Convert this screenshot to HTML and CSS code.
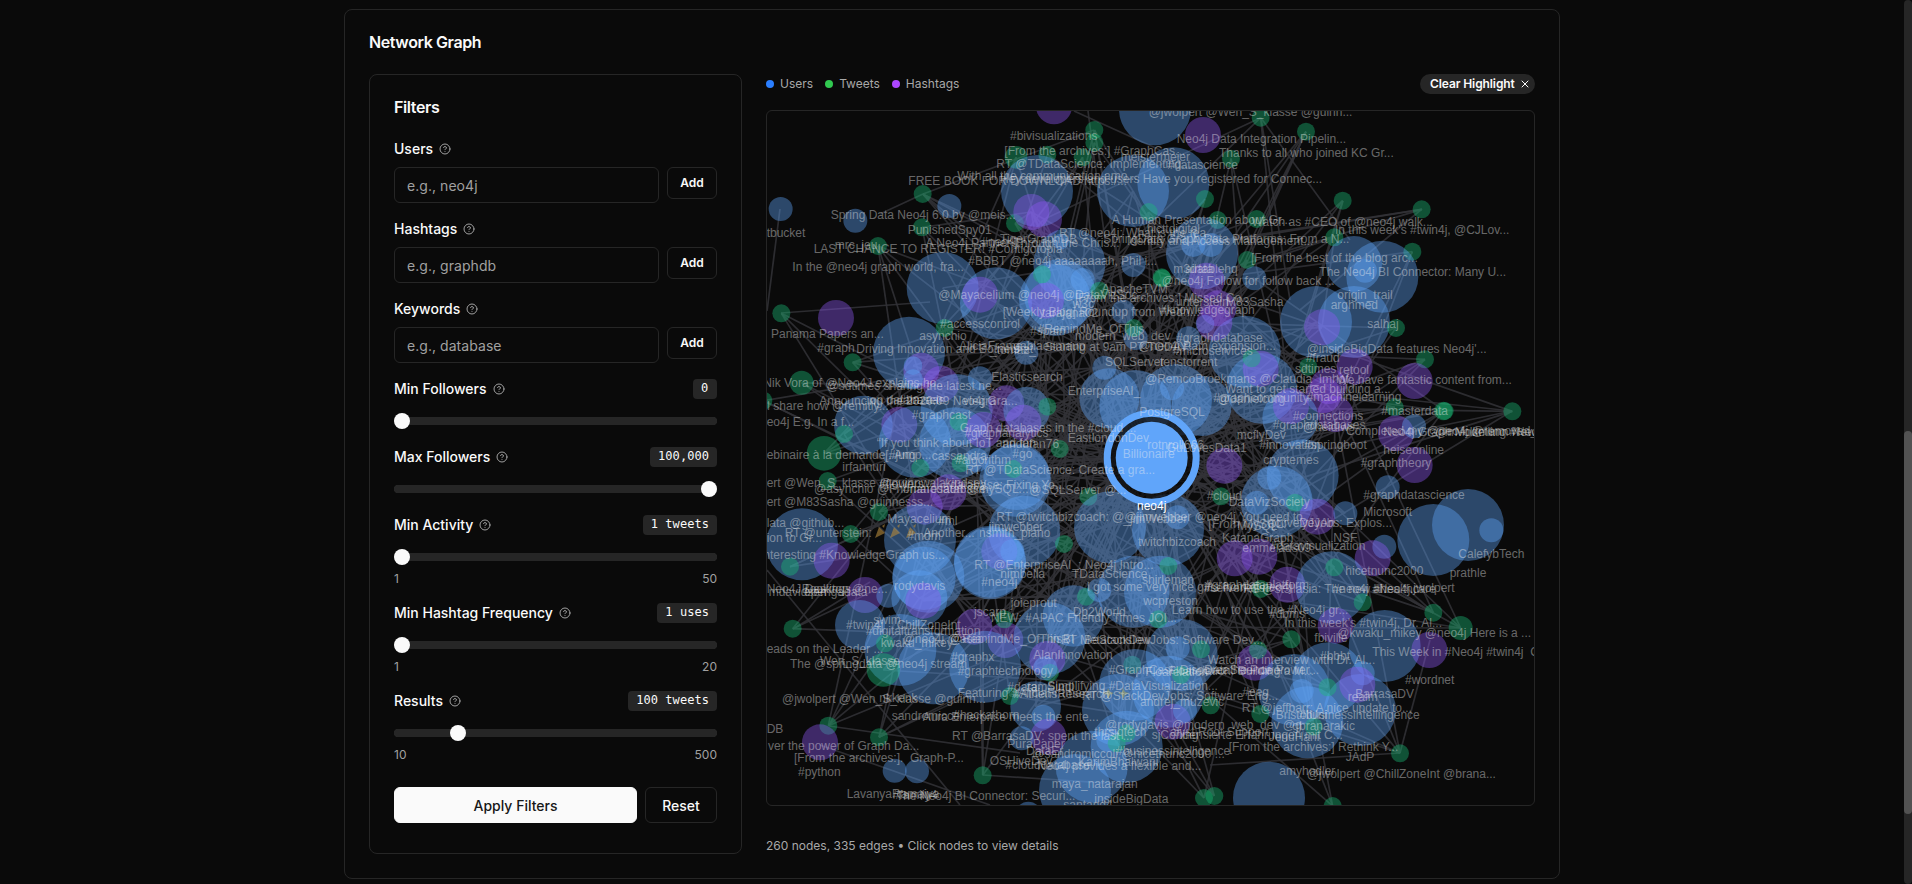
FILE: index.html
```html
<!DOCTYPE html>
<html lang="en">
<head>
<meta charset="utf-8">
<title>Network Graph</title>
<link rel="stylesheet" href="styles.css">
</head>
<body>
<svg class="defs" aria-hidden="true"><symbol id="help" viewBox="0 0 24 24"><circle cx="12" cy="12" r="10"/><path d="M9.09 9a3 3 0 0 1 5.83 1c0 2-3 3-3 3M12 17h.01"/></symbol></svg>
<main class="card">
  <h1 class="title">Network Graph</h1>
  <div class="columns">
    <section class="filters">
      <h2 class="title">Filters</h2>
      <div class="field">
        <div class="label">Users <svg class="help"><use href="#help"/></svg></div>
        <div class="entry"><input class="input" placeholder="e.g., neo4j"><button class="btn add">Add</button></div>
      </div>
      <div class="field">
        <div class="label">Hashtags <svg class="help"><use href="#help"/></svg></div>
        <div class="entry"><input class="input" placeholder="e.g., graphdb"><button class="btn add">Add</button></div>
      </div>
      <div class="field">
        <div class="label">Keywords <svg class="help"><use href="#help"/></svg></div>
        <div class="entry"><input class="input" placeholder="e.g., database"><button class="btn add">Add</button></div>
      </div>
      <div class="field">
        <div class="label">Min Followers <svg class="help"><use href="#help"/></svg><span class="value">0</span></div>
        <div class="slider"><i class="thumb"></i></div>
      </div>
      <div class="field">
        <div class="label">Max Followers <svg class="help"><use href="#help"/></svg><span class="value">100,000</span></div>
        <div class="slider"><i class="thumb" style="margin-left:307px"></i></div>
      </div>
      <div class="field">
        <div class="label">Min Activity <svg class="help"><use href="#help"/></svg><span class="value">1 tweets</span></div>
        <div class="slider"><i class="thumb"></i></div>
        <div class="limits"><span>1</span><span>50</span></div>
      </div>
      <div class="field">
        <div class="label">Min Hashtag Frequency <svg class="help"><use href="#help"/></svg><span class="value">1 uses</span></div>
        <div class="slider"><i class="thumb"></i></div>
        <div class="limits"><span>1</span><span>20</span></div>
      </div>
      <div class="field">
        <div class="label">Results <svg class="help"><use href="#help"/></svg><span class="value">100 tweets</span></div>
        <div class="slider"><i class="thumb" style="margin-left:56px"></i></div>
        <div class="limits"><span>10</span><span>500</span></div>
      </div>
      <div class="actions"><button class="btn apply">Apply Filters</button><button class="btn reset">Reset</button></div>
    </section>
    <section class="graph">
      <div class="toolbar">
        <span class="key"><i class="dot users"></i><span>Users</span></span>
        <span class="key"><i class="dot tweets"></i><span>Tweets</span></span>
        <span class="key"><i class="dot hashtags"></i><span>Hashtags</span></span>
        <button class="clear"><span>Clear Highlight</span> <svg class="close" viewBox="0 0 24 24"><path d="M18 6 6 18M6 6l12 12"/></svg></button>
      </div>
      <svg class="canvas" id="canvas" viewBox="767 111 767 694"></svg>
      <p class="summary">260 nodes, 335 edges • Click nodes to view details</p>
    </section>
  </div>
</main>
<div class="scrollbar"><i class="grip"></i></div>
<script src="graph.js"></script>
</body>
</html>
```
FILE: styles.css
```css
* { box-sizing: border-box; }
html, body { margin: 0; height: 100%; overflow: hidden; background: #0a0a0a; }
body { color: #fafafa; font-family: Inter, "Liberation Sans", sans-serif; font-size: 14px; padding: 9px 8px 0 0; }
.defs { position: absolute; width: 0; height: 0; }
.card { width: 1216px; height: 870px; margin-left: 344px; padding: 24px; border: 1px solid #262626; border-radius: 8px; }
.title { margin: 0 0 24px; font-size: 16px; line-height: 16px; font-weight: 600; letter-spacing: -0.4px; }
.columns { display: grid; grid-template-columns: 373px 769px; gap: 24px; }
.filters { height: 780px; padding: 24px; border: 1px solid #262626; border-radius: 8px; }
.field { display: flow-root; margin-bottom: 16px; }
.label { display: flex; align-items: center; height: 20px; line-height: 20px; font-weight: 500; }
.help { width: 12px; height: 12px; margin-left: 6px; fill: none; stroke: #a1a1a1; stroke-width: 2; stroke-linecap: round; stroke-linejoin: round; }
.value { margin-left: auto; padding: 0 8px; height: 20px; border-radius: 4px; background: #262626; font: 12px/19px "DejaVu Sans Mono", monospace; letter-spacing: 0.05px; min-width: 24px; }
.entry { display: flex; align-items: flex-start; gap: 8px; margin-top: 8px; }
.input { flex: 1; min-width: 0; height: 36px; padding: 2px 12px; background: transparent; border: 1px solid #262626; border-radius: 6px; color: #fafafa; font: 14px Inter, sans-serif; letter-spacing: 0.05px; }
.input::placeholder { color: #a1a1a1; opacity: 1; }
.btn { padding: 0; border: 1px solid #262626; border-radius: 6px; background: transparent; color: #fafafa; font: 500 14px Inter, sans-serif; }
.add { width: 50px; height: 32px; padding-bottom: 1px; font-size: 12px; font-weight: 600; }
.slider { height: 16px; margin: 14px 0 2px; padding: 0; background: linear-gradient(#262626, #262626) center / calc(100% - 8px) 8px no-repeat, radial-gradient(circle at 4px 8px, #262626 4px, transparent 4.5px), radial-gradient(circle at calc(100% - 4px) 8px, #262626 4px, transparent 4.5px); }
.thumb { display: block; width: 16px; height: 16px; border-radius: 50%; background: #fafafa; }
.limits { display: flex; justify-content: space-between; padding-top: 4px; font-size: 12px; line-height: 16px; color: #a1a1a1; }
.actions { display: flex; gap: 8px; margin-top: 24px; }
.apply { flex: 1; height: 36px; background: #fafafa; color: #171717; border-color: #fafafa; }
.reset { width: 72px; height: 36px; }
.toolbar { display: flex; align-items: center; gap: 12px; height: 20px; margin-bottom: 16px; font-size: 12px; color: #a8a8a8; }
.key { display: flex; align-items: center; gap: 6px; }
.key span, .clear span { margin-top: -1px; }
.dot { width: 8px; height: 8px; border-radius: 50%; }
.users { background: #2b7fff; }
.tweets { background: #31c950; }
.hashtags { background: #ad46ff; }
.clear { display: flex; align-items: center; gap: 4px; margin-left: auto; width: 115px; height: 20px; padding: 0 0 0 10px; border: 0; border-radius: 10px; background: #262626; color: #fafafa; font: 600 12px Inter, sans-serif; letter-spacing: -0.1px; white-space: nowrap; }
.close { flex: none; width: 12px; height: 12px; fill: none; stroke: #fafafa; stroke-width: 2; stroke-linecap: round; }
.canvas { display: block; width: 769px; height: 696px; border: 1px solid #262626; border-radius: 6px; overflow: hidden; }
.canvas text { font: 12px "Liberation Sans", Arial, sans-serif; fill: #f0f0f0; fill-opacity: .42; white-space: pre; }
.canvas .selected { fill: #fff; fill-opacity: 1; }
.edge { stroke: #323237; stroke-opacity: .85; stroke-width: 1.7; }
.node { fill-opacity: .4; }
.b, .B { fill: #60a5fa; }
.g { fill: #18bd78; }
.p { fill: #8f58f6; }
.halo { fill: none; stroke: #60a5fa; stroke-width: 7; }
.gap { fill: none; stroke: #0a0a0a; stroke-width: 6; stroke-opacity: .7; }
.core { fill: #60a5fa; }
.popper { fill: #b58a3c; fill-opacity: .6; }
.spark { fill: #facc15; fill-opacity: .3; }
.summary { margin: 32px 0 0; font-size: 12px; line-height: 16px; color: #a8a8a8; }
.scrollbar { position: absolute; right: 0; top: 0; width: 8px; height: 884px; border-radius: 4px; background: #262626; }
.grip { display: block; margin-top: 431px; height: 383px; border-radius: 4px; background: #525252; }
```
FILE: graph.js
```js
// Each cluster has an origin; node and label positions are in thirds of a pixel.
// Node kinds: B large user, b small user, g tweet, p hashtag.
const clusters = [
{ x: 760, y: 60,
nodes: "B 1185 148,p 882 139,g 1003 210,g 1003 248,g 968 292,g 862 284,g 768 292 34,B 831 393,B 1119 393,B 1240 370,g 488 402,b 568 438,b 62 447,b 286 482,g 486 502,g 765 490,p 814 456,p 852 478,g 354 558,b 1120 615,g 1166 456,B 928 612,B 548 684,B 708 730,B 885 720,B 900 705,p 660 704,p 858 722,b 968 660,g 846 643,g 1018 692,g 1205 652,g 64 760,p 228 774,b 902 545 24,b 1090 755",
labels: [[1166,155,"@jwolpert @Wen_S_klasse @guinn..."],[750,228,"#bivisualizations"],[733,273,"[From the archives:] #GraphCas..."],[1082,291,"meistermeier"],[709,312,"RT @TDataScience: Implementing..."],[592,347,"With all the communication amo..."],[720,356,"Hey developers and users Have you registered for Connec..."],[445,362,"FREE BOOK FOR DOWNLOAD https:/..."],[212,465,"Spring Data Neo4j 6.0 by @meis..."],[443,510,"PunishedSpy01"],[224,555,"mrc_jeu"],[161,567,"LAST CHANCE TO REGISTER! #Contigotopia"],[497,548,"A Neo4j Partner Through the Chris..."],[664,545,"#neo4j"],[720,537,"TigerGraphDB"],[625,602,"#BBBT @neo4j aaaaaaaah, Phil i..."],[897,518,"RT @neo4j: What is the fea..."],[97,620,"In the @neo4j graph world, fra..."],[20,518,"tbucket"],[535,704,"@Mayacelium @neo4j @DataVizSoc..."],[1025,686,"ApacheTVM"],[945,715,"[From the archives:] Missed Co..."],[938,732,"w3c"],[728,756,"[Weekly Blog] Roundup from Wedn..."],[845,758,"tarajana02"],[1055,480,"A Human Presentation about Gr..."],[1160,508,"hicttdigital"],[1030,538,"SpringData Graph Data Platforms: From a N..."],[1100,543,"Identity and Access Management..."]] },
{ x: 1150, y: 60,
nodes: "p 159 225,g 332 173,g 468 215,g 243 296,g 165 417,g 578 422,g 815 448,g 203 480,g 320 477,g 553 532,g 787 575,g 292 600,B 156 580,b 130 555,b 183 555,b 313 655,p 170 662,p 205 745,g 37 655,B 612 612 84,B 697 650,b 645 632,B 498 786,B 612 786",
labels: [[80,237,"Neo4j Data Integration Pipelin..."],[207,279,"Thanks to all who joined KC Gr..."],[52,315,"#datascience"],[305,486,"Watch as #CEO of @neo4j walk..."],[555,510,"In this week's #twin4j, @CJLov..."],[303,594,"[From the best of the blog arc..."],[508,636,"The Neo4j BI Connector: Many U..."],[70,627,"m3data"],[105,628,"airtablehq"],[35,663,"@neo4j Follow for follow back ..."],[562,705,"origin_trail"],[542,736,"arghmed"],[78,725,"unterstein"],[228,726,"M83Sasha"],[30,750,"#knowledgegraph"]] },
{ x: 760, y: 310,
nodes: "B 447 128,g 554 54,p 484 182,b 459 167 28,b 459 208 30,p 543 222,B 590 300,b 660 205,g 278 157,g 125 218 36,g 10 272,B 310 345 88,p 418 344,B 465 395,g 252 372,B 585 400,p 739 280,B 800 300 70,g 862 290,p 790 338,p 670 360,g 596 335,g 192 430 52,g 203 513,g 481 474,g 602 460,g 899 417,B 766 512,B 770 500 100,g 760 477,p 565 547,p 494 590,g 985 560,g 357 606,B 480 690,B 126 703,p 215 752,g 272 672,g 90 770,B 793 665,B 690 755,p 718 724,b 757 724,g 912 702,B 492 805 95,B 1050 652,B 1224 660,B 1048 265 90,B 1126 288,b 1033 173,b 1127 84,g 1121 54,b 799 128,b 650 450",
labels: [[33,72,"Panama Papers an..."],[540,42,"#accesscontrol"],[478,77,"asynchio"],[172,113,"#graph"],[289,116,"Driving Innovation and Botnets at"],[597,107,"AliciaFrame"],[760,108,"gablaesmaup"],[690,121,"_tomaz_"],[854,111,"Starting at 9am PT TODAY!"],[810,62,"#spain"],[833,57,"#RemindMe_OfThis"],[945,78,"modern_web_dev"],[1135,108,"@neo4j Path expansion..."],[1035,156,"SQLServer"],[694,200,"Elasticsearch"],[923,242,"EnterpriseAI_"],[1155,207,"@RemcoBroekmans @Claudia_Imhof..."],[10,219,"Nik Vora of @Neo4J explains ho..."],[200,227,"@sdtimes sharing the latest ne..."],[178,272,"Announcing the 2020.09 Neo4j Gra..."],[330,271,"on databasels"],[418,271,"#bazaar"],[610,273,"vlegra"],[20,288,"I share how @remitly..."],[20,336,"eo4j E.g. In a f..."],[455,315,"#graphcast"],[599,353,"Graph databases in the #cloud ..."],[613,370,"#graphanalytics"],[350,400,"“If you think about IoT and fan"],[727,401,"andufan76"],[923,384,"EastlondonDev"],[20,435,"ebinaire à la demande #jump..."],[375,435,"[. Ang"],[515,438,"cassandra"],[585,450,"#algorithm"],[757,431,"#go"],[247,471,"irfannuri"],[616,480,"RT @TDataScience: Create a gra..."],[20,519,"ert @Wen_S_klasse @guinnwalakindsey"],[357,523,"#flowers"],[550,525,"#database: Fixing Yo..."],[162,537,"@asynchio @Fhomaresaon @mySQL..."],[429,537,"#nanodatabase"],[808,540,"@SQLServer @..."],[20,576,"ert @M83Sasha @guinnesss..."],[382,626,"Mayacelium"],[534,634,"#ml"],[20,640,"lata @github..."],[74,669,"RT @unterstein:"],[490,669,"Another..."],[442,679,"#mdm"],[20,684,"ion to Gr..."],[657,668,"nsmith_piano"],[686,650,"jimwebber"],[709,620,"RT @twitchbizcoach: @@jimwebber @neo4j You need to..."],[1090,626,"_jimWebber"],[10,736,"nteresting #KnowledgeGraph us..."],[643,765,"RT @EnterpriseAI_: Neo4j Intro..."],[1134,695,"twitchbizcoach"],[1138,305,"PostgreSQL"],[1162,404,"rotnroll666"],[1088,432,"Billionaire"]] },
{ x: 1150, y: 310,
nodes: "B 284 125,B 335 235 106,p 332 176,g 305 145,b 165 42 28,b 115 85,p 193 38,p 516 52,g 738 54,g 825 148,p 794 213,p 614 170,g 475 170,p 535 228,p 520 255,p 556 312,g 734 292,g 880 303 28,g 884 303,g 1087 304,p 738 370,b 792 349,p 794 465,B 421 325 84,p 423 288,B 458 496,B 380 575,b 358 503,b 320 578,g 435 578,p 223 467,g 213 559,B 78 270,b 66 234,B 155 288 90,p 502 620,b 586 610,b 713 532,B 850 690,B 954 645,b 1024 661,b 703 710,p 668 745,p 328 740,p 254 745,b 82 622",
labels: [[652,42,"salhaj"],[78,84,"#graphdatabase"],[68,123,"#microservices"],[30,156,"tenstorrent"],[470,117,"@insideBigData features Neo4j'..."],[467,145,"#fraud"],[435,178,"sdtimes"],[567,180,"retool"],[560,210,"We have fantastic content from..."],[225,236,"Want to get started building a..."],[190,265,"#graphcommunity"],[203,267,"@danielcorg"],[470,261,"#machinelearning"],[694,303,"#masterdata"],[428,317,"#connections"],[368,345,"#graphdatabases"],[458,352,"@heidiws"],[588,362,"Completed my @neo4j @removed_ @_en..."],[700,366,"Neo4j Graph Modelling #Neo4j"],[855,367,"@mvolkmann Newy4jatabase"],[260,375,"mcflyDev"],[328,405,"#innovation"],[462,405,"#springboot"],[700,419,"heiseonline"],[632,460,"#graphtheory"],[340,450,"cryptemes"],[50,413,"GuLovesData1"],[170,557,"#cloud"],[236,577,"DataVizSociety"],[640,555,"#graphdatascience"],[640,606,"Microsoft"],[175,641,"[From MySQL:"],[262,647,"MySQL"],[354,640,"activeDJJobs: Explos..."],[455,640,"yeyAn"],[216,684,"KatanaGraph"],[550,684,"NSF"],[277,713,"emmelads09"],[360,708,"#datavisualization"],[925,731,"CalefybTech"],[899,789,"prathle"],[586,782,"hicetnunc2000"]] },
{ x: 760, y: 560,
nodes: "p 315 105,b 385 107,B 300 195 75,g 98 206,B 421 270,B 520 325,B 505 50,B 478 115 84,p 490 122,B 690 10,g 375 250,g 370 330 50,p 643 200,p 736 240,g 733 178,B 675 320,B 868 235,B 940 168 92,p 862 297,g 870 338,b 856 325,g 978 110,b 1018 90,B 1200 95,B 1120 95,g 205 497,p 180 547,g 357 532,g 668 646,b 404 632,b 471 634,B 827 440 76,g 750 408,b 850 470,p 865 530,b 785 535,g 1117 314,B 1125 375,B 1074 450,B 1100 560,B 995 620,B 945 690,b 1045 540,g 1100 520,g 1070 550,b 805 765 40,B 1225 395",
labels: [[20,87,"Neo4J Desktop @ne..."],[125,87,"Bookings"],[26,97,"mdavidsen"],[132,95,"opengadata"],[402,78,"rodydavis"],[664,66,"#neo4j"],[721,42,"nimbella"],[936,42,"TDataScience"],[980,80,"I got some very nice gifts from @neo4j"],[1146,61,"shirleman"],[1150,123,"wcpreston"],[752,129,"joieprout"],[642,157,"jscarp"],[692,174,"NEW: #APAC Friendly Times JOI..."],[938,157,"Db2World"],[340,179,"swim"],[258,195,"#twin4j"],[410,195,"ChillZoneInt"],[317,212,"#digitaltransformation"],[362,249,"kwaku_mikey"],[428,238,"@neo4j @asia"],[570,238,"@RemindMe_OfThis"],[870,238,"in BI"],[903,239,"RT MetaconsIew"],[972,240,"BeStackDevJobs: Software Dev..."],[20,267,"eads on the Leader ..."],[180,302,"Wen_S_klasse"],[90,312,"The @springdata @neo4j stream"],[573,291,"#graphx"],[820,285,"AlanInnovation"],[593,332,"#graphtechnology"],[742,380,"#data"],[800,380,"ramSindl"],[862,378,"Simplifying #DataVisualization..."],[593,398,"Featuring #AliciaFrame"],[760,403,"#AthensResearch"],[66,416,"@jwolpert @Wen_S_klasse @guinn..."],[358,414,"nkkenk"],[395,467,"sandromicco"],[488,471,"Aura Enterprise meets the ente..."],[580,464,"#hackathorn"],[20,507,"DB"],[24,557,"ver the power of Graph Da..."],[102,594,"[From the archives:].  Graph-P..."],[114,636,"#python"],[576,527,"RT @BarrasaDV: spent the last ..."],[742,553,"PuraPaper"],[798,572,"DataEr"],[817,581,"@sandromiccoli @nicetnunc2000 ..."],[689,602,"OSHiveDev"],[736,614,"#clouddatabase"],[832,617,"Neo4j provides a flexible and..."],[955,605,"KarimBhalwani"],[1068,574,"#businessintelligence"],[875,671,"maya_natarajan"],[260,702,"LavanyaRamaiya"],[398,704,"#family4"],[408,709,"The Neo4j BI Connector: Securi..."],[1003,717,"insideBigData"],[910,736,"santand4"],[1046,329,"#GraphCast: Discover the Power"],[1156,335,"Floarelation"],[965,408,"RT @StackDevJobs: Software Eng..."],[1140,427,"andrej_muzevic"],[1035,496,"@rodydavis @modern_web_dev @g"],[1003,516,"thrsjqtech"]] },
{ x: 1150, y: 560,
nodes: "p 412 74,B 545 82,g 553 22,g 332 87,g 638 127,p 557 197,g 850 158,g 932 204 36,g 424 238,B 704 258,p 838 270,B 95 285,g 153 268,b 83 265,p 315 308,g 324 270,B 432 390,B 535 355,B 630 450,B 472 487,b 455 393,b 638 340,p 622 374,g 533 382,g 491 500,g 182 436,g 331 462,p 68 485,b 105 452,g 750 580,B 357 713,g 162 714,g 193 708,g 548 738,g 25 178,g 93 345,g 55 18",
labels: [[790,84,"jwolpert"],[165,76,"#graphdataplatform"],[161,83,"#serverless"],[280,86,"RT @st3llasia: The new ai.."],[548,86,"#neo4j #Neo4j..."],[670,86,"#healthcare"],[65,150,"Learn how to use the #Neo4j gr..."],[357,161,"#dbms"],[403,188,"In this week's #twin4j, Dr. Al..."],[562,219,"@kwaku_mikey @neo4j Here is a ..."],[493,234,"fbiville"],[667,276,"This Week in #Neo4j #twin4j  Grap"],[510,289,"#bbbt"],[173,300,"Watch an interview with Dr. Al..."],[765,360,"#wordnet"],[55,333,"Floarelation: Building a M..."],[163,331,"DataScience Power..."],[277,396,"#eeg"],[616,401,"BarrasaDV"],[593,411,"realm"],[275,443,"RT @jeffbarr: A nice update to..."],[377,465,"BristolUni"],[447,466,"#businessintellingence"],[427,499,"gbranarakic"],[60,517,"alyst Root Support"],[5,526,"sjConing"],[98,526,"densierte Erfahrungen mit C..."],[356,531,"JenuHani"],[236,561,"[From the archives:] Rethink Y..."],[587,590,"JAdP"],[388,632,"amyhodler"],[470,642,"@jwolpert @ChillZoneInt @brana..."]] }
];

const NS = "http://www.w3.org/2000/svg";
const canvas = document.getElementById("canvas");
const radius = { B: 108, b: 36, g: 27, p: 54 };
const add = (tag, attrs, text) => {
  const el = document.createElementNS(NS, tag);
  for (const k in attrs) el.setAttribute(k, attrs[k]);
  if (text) el.textContent = text;
  canvas.appendChild(el);
};
const line = (a, b, c, d) => add("line", { x1: a, y1: b, x2: c, y2: d, class: "edge" });

const nodes = clusters.flatMap(c => c.nodes.split(",").map(s => {
  const [kind, x, y, r] = s.trim().split(" ");
  return { kind, x: c.x + x / 3, y: c.y + y / 3, r: (r || radius[kind]) / 3 };
}));

const hub = { x: 1151.7, y: 457.7 };
let seed = 11;
const rand = () => (seed = (seed * 16807) % 2147483647) / 2147483647;
const others = nodes.filter(n => n.kind !== "g");
const inner = n => Math.hypot((n.x - 1130) / 250, (n.y - 460) / 270) < 1;
const core = others.filter(inner);
nodes.filter(n => n.kind === "g").forEach(t => {
  for (let i = 0; i < 3; i++) {
    const o = core[Math.floor(rand() * core.length)];
    line(t.x, t.y, o.x, o.y);
  }
  if (inner(t) || rand() < .35) line(t.x, t.y, hub.x, hub.y);
});
others.forEach(o => {
  if (inner(o)) line(o.x, o.y, hub.x + (rand() - .5) * 200, hub.y + (rand() - .5) * 100);
});
[[780,209,767,311],[781,313,930,302],[923,194,880,214],[923,194,1094,130],[923,194,985,245],[878,246,960,500],[793,629,870,582],[829,726,1020,753],[829,726,905,560],[879,737,960,480],[983,775,983,560],[983,775,1135,785],[1512,411,1180,480],[1512,411,1250,570],[1512,411,1380,397],[1422,209,1300,310],[1400,753,1200,690],[1400,753,1430,640],[1400,753,1210,765],[767,570,960,805],[820,745,990,805],[1433,613,1290,520],[1461,628,1280,600],[1343,201,1305,330],[1306,132,1190,300],[1261,118,1290,300],[1261,118,1350,240],[1088,111,1105,240],[1074,111,1160,150]].forEach(e => line(...e));

nodes.forEach(n => add("circle", { cx: n.x, cy: n.y, r: n.r, class: "node " + n.kind }));

[880, 895, 911].forEach(x => add("path", { d: `M${x - 5} 538l4-11 6 6zM${x + 2} 526l3-2-1 4z`, class: "popper" }));
[1108, 1123].forEach(x => add("path", { d: `M${x} 688l2 4 4 1-4 2-2 4-1-4-4-2 4-1z`, class: "spark" }));

// Selected node
add("circle", { cx: hub.x, cy: hub.y, r: 38.5, class: "gap" });
add("circle", { cx: hub.x, cy: hub.y, r: 44.5, class: "halo" });
add("circle", { cx: hub.x, cy: hub.y, r: 36, class: "core" });

clusters.forEach(c => c.labels.forEach(([x, y, t]) => add("text", { x: c.x + x / 3, y: c.y + y / 3 + 4 }, t)));
add("text", { x: hub.x, y: 510, "text-anchor": "middle", class: "selected" }, "neo4j");
```
